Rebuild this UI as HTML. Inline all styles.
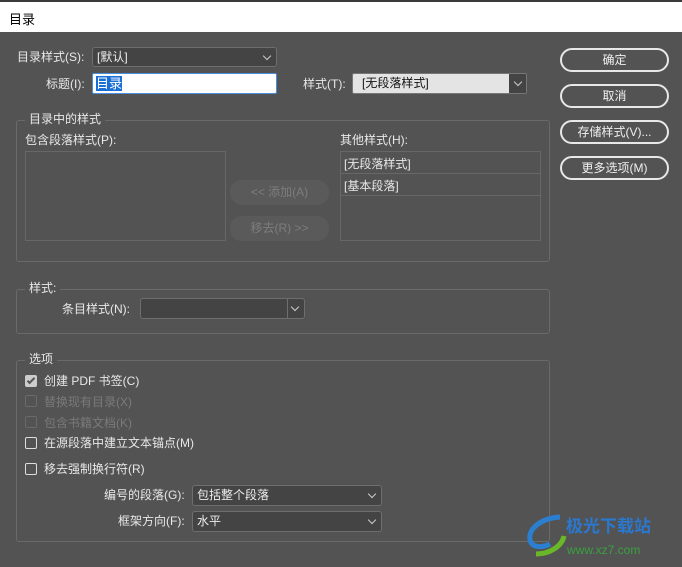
<!DOCTYPE html>
<html><head><meta charset="utf-8"><style>
*{box-sizing:border-box;margin:0;padding:0}
body{width:682px;height:567px;background:#535353;position:relative;overflow:hidden;font-family:"Liberation Sans","Noto Sans CJK SC",sans-serif;font-size:12px;color:#e8e8e8}
.a{position:absolute;white-space:nowrap;line-height:14px}
.title{position:absolute;left:0;top:0;width:682px;height:32px;background:#fff;border-top:2px solid #3a3a3a;color:#000;font-size:13px;padding:7px 0 0 9px}
.dd{position:absolute;background:#444;border:1px solid #6e6e6e;border-radius:3px;color:#eee;padding:2px 0 0 4px;line-height:14px}
.chev{position:absolute;right:6px;top:5px;width:6px;height:6px;border-right:1px solid #ccc;border-bottom:1px solid #ccc;transform:rotate(45deg)}
.btn{position:absolute;left:560px;width:109px;height:24px;border:2px solid #e8e8e8;border-radius:12px;text-align:center;line-height:20px;color:#f0f0f0}
.grp{position:absolute;border:1px solid #6a6a6a;border-radius:3px}
.lg{position:absolute;background:#535353;padding:0 4px;line-height:14px}
.list{position:absolute;border:1px solid #676767}
.dim{position:absolute;left:230px;width:99px;height:25px;border-radius:12px;background:#5a5a5a;color:#7d7d7d;text-align:center;line-height:25px}
.cb{position:absolute;left:25px;width:12px;height:12px;border:1px solid #ddd;border-radius:2px}
</style></head><body>
<div class="title">目录</div>

<div class="a" style="left:17px;top:50px">目录样式(S):</div>
<div class="dd" style="left:92px;top:47px;width:185px;height:20px">[默认]<span class="chev"></span></div>
<div class="a" style="left:46px;top:77px">标题(I):</div>
<div style="position:absolute;left:92px;top:73px;width:185px;height:21px;background:#fff;border:1px solid #4a90e2;border-radius:2px"><span style="position:absolute;left:3px;top:2px;background:#1a6fd6;color:#fff;font-size:13px;line-height:15px">目录</span></div>
<div class="a" style="left:303px;top:77px">样式(T):</div>
<div style="position:absolute;left:352px;top:73px;width:175px;height:21px;background:#e4e4e4;border:1px solid #777;border-radius:2px;color:#111;padding:2px 0 0 9px;line-height:15px">[无段落样式]<div style="position:absolute;right:0;top:0;width:17px;height:19px;background:#444"><span class="chev" style="right:5px"></span></div></div>

<div class="btn" style="top:48px">确定</div>
<div class="btn" style="top:84px">取消</div>
<div class="btn" style="top:120px">存储样式(V)...</div>
<div class="btn" style="top:156px">更多选项(M)</div>

<div class="grp" style="left:16px;top:120px;width:534px;height:142px"></div>
<div class="lg" style="left:25px;top:112px">目录中的样式</div>
<div class="a" style="left:25px;top:133px">包含段落样式(P):</div>
<div class="list" style="left:25px;top:151px;width:201px;height:90px"></div>
<div class="dim" style="top:180px">&lt;&lt; 添加(A)</div>
<div class="dim" style="top:216px">移去(R) &gt;&gt;</div>
<div class="a" style="left:340px;top:133px">其他样式(H):</div>
<div class="list" style="left:340px;top:151px;width:201px;height:90px">
<div style="height:22px;border-bottom:1px solid #676767;padding:3px 0 0 3px">[无段落样式]</div>
<div style="height:22px;border-bottom:1px solid #676767;padding:3px 0 0 3px">[基本段落]</div>
</div>

<div class="grp" style="left:16px;top:289px;width:534px;height:45px"></div>
<div class="lg" style="left:25px;top:281px">样式:</div>
<div class="a" style="left:62px;top:302px">条目样式(N):</div>
<div class="dd" style="left:140px;top:298px;width:165px;height:21px"><div style="position:absolute;left:146px;top:0;width:1px;height:19px;background:#6e6e6e"></div><span class="chev"></span></div>

<div class="grp" style="left:16px;top:360px;width:534px;height:182px"></div>
<div class="lg" style="left:25px;top:352px">选项</div>
<div class="cb" style="top:375px;background:#ccc;border-color:#ccc"><span style="position:absolute;left:3px;top:0px;width:4px;height:8px;border-right:2px solid #555;border-bottom:2px solid #555;transform:rotate(45deg)"></span></div>
<div class="a" style="left:44px;top:374px">创建 PDF 书签(C)</div>
<div class="cb" style="top:395px;border-color:#6a6a6a"></div>
<div class="a" style="left:44px;top:395px;color:#7a7a7a">替换现有目录(X)</div>
<div class="cb" style="top:416px;border-color:#6a6a6a"></div>
<div class="a" style="left:44px;top:416px;color:#7a7a7a">包含书籍文档(K)</div>
<div class="cb" style="top:437px"></div>
<div class="a" style="left:44px;top:436px">在源段落中建立文本锚点(M)</div>
<div class="cb" style="top:463px"></div>
<div class="a" style="left:44px;top:462px">移去强制换行符(R)</div>
<div class="a" style="left:104px;top:488px">编号的段落(G):</div>
<div class="dd" style="left:192px;top:485px;width:190px;height:21px">包括整个段落<span class="chev"></span></div>
<div class="a" style="left:118px;top:514px">框架方向(F):</div>
<div class="dd" style="left:192px;top:511px;width:190px;height:21px">水平<span class="chev"></span></div>

<svg style="position:absolute;left:524px;top:514px" width="50" height="45"><path d="M36 3C18 4 4 14 6 26c2 8 12 8 20 4" stroke="#2a7fd0" stroke-width="5" fill="none"/><path d="M12 40c14 0 26-8 28-18" stroke="#6ab82a" stroke-width="5" fill="none"/></svg>
<div class="a" style="left:566px;top:517px;color:#2a78d0;font-size:17px;font-weight:bold;line-height:20px">极光下载站</div>
<div class="a" style="left:567px;top:543px;color:#3aa040;font-size:12px;line-height:14px">www.xz7.com</div>
</body></html>
